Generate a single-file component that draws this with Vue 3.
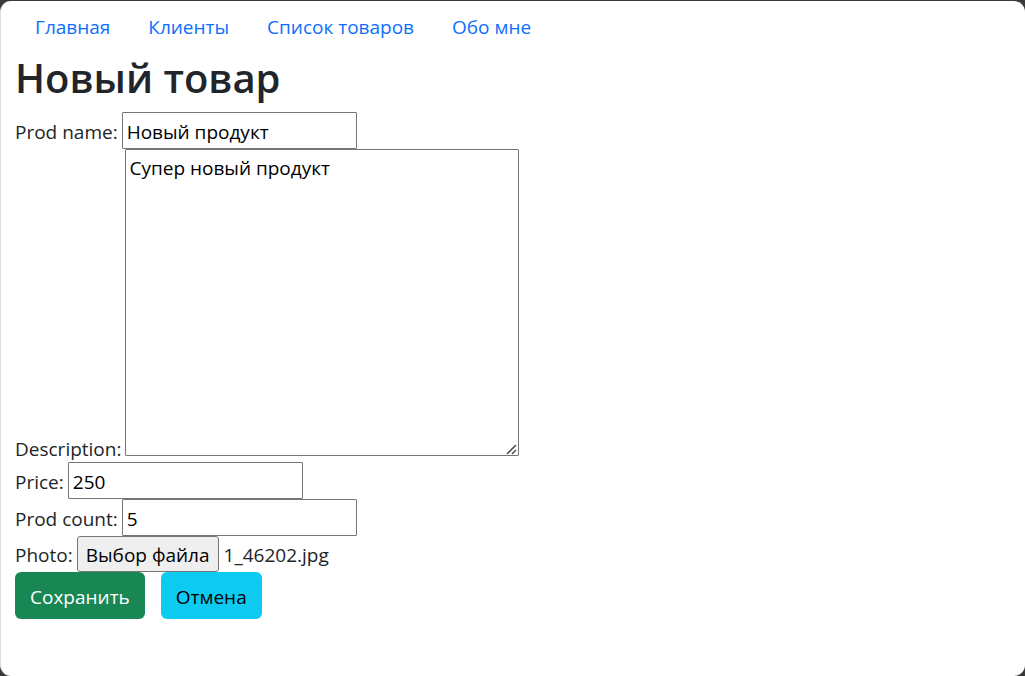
<script setup>
import { ref } from 'vue'

const links = ['Главная', 'Клиенты', 'Список товаров', 'Обо мне']
const name = ref('Новый продукт')
const description = ref('Супер новый продукт')
const price = ref('250')
const count = ref('5')
const fileName = ref('1_46202.jpg')
const picker = ref(null)

function onFile(event) {
  const file = event.target.files[0]
  if (file) fileName.value = file.name
}
</script>

<template>
  <div class="window">
    <nav class="nav">
      <a v-for="link in links" :key="link" href="#">{{ link }}</a>
    </nav>
    <main>
      <h1>Новый товар</h1>
      <form @submit.prevent>
        <div class="row">
          <label for="name">Prod name:</label>
          <input id="name" v-model="name" class="field" type="text" />
        </div>
        <div class="row row-area">
          <label for="description">Description:</label>
          <textarea id="description" v-model="description" spellcheck="false"></textarea>
        </div>
        <div class="row">
          <label for="price">Price:</label>
          <input id="price" v-model="price" class="field" type="text" />
        </div>
        <div class="row">
          <label for="count">Prod count:</label>
          <input id="count" v-model="count" class="field" type="text" />
        </div>
        <div class="row">
          <label for="choose">Photo:</label>
          <button id="choose" class="choose" type="button" @click="picker.click()">Выбор файла</button>
          <span>{{ fileName }}</span>
          <input ref="picker" type="file" hidden @change="onFile" />
        </div>
        <div class="actions">
          <button class="btn save" type="submit">Сохранить</button>
          <button class="btn cancel" type="button">Отмена</button>
        </div>
      </form>
    </main>
  </div>
</template>

<style>
body {
  background: #3a3a3a;
}
</style>

<style scoped>
.window {
  box-sizing: border-box;
  min-height: calc(100vh - 1px);
  margin-top: 1px;
  padding: 0 14px 32px;
  border-left: 1px solid #dedede;
  border-radius: 11px;
  background: #fff;
  color: #212529;
  font: 19px/30px "Segoe UI", "Open Sans", "Noto Sans", sans-serif;
}

.nav {
  display: flex;
  flex-wrap: wrap;
  gap: 38px;
  padding: 11px 20px 10px;
}

.nav a {
  color: #0d6efd;
  text-decoration: none;
}

h1 {
  margin: 0 0 9px;
  font-size: 40px;
  line-height: 51px;
  font-weight: 600;
}

.row {
  display: flex;
  align-items: center;
  gap: 4px;
}

label {
  padding-top: 2px;
}

.row span {
  padding: 2px 0 0 1px;
}

.row-area {
  align-items: flex-end;
  margin-bottom: 6px;
}

.row-area label {
  margin-bottom: -8px;
}

.field,
textarea,
.choose {
  box-sizing: border-box;
  margin: 0;
  border: 1px solid #767676;
  border-radius: 1px;
  background: #fff;
  color: #000;
  font: inherit;
}

.field {
  width: 235px;
  height: 37px;
  padding: 2px 4px 0;
}

textarea {
  width: 394px;
  height: 307px;
  padding: 3px;
  resize: both;
}

textarea::-webkit-resizer {
  background: url("data:image/svg+xml,%3Csvg xmlns='http://www.w3.org/2000/svg' width='15' height='15'%3E%3Cpath d='M4 14l9-9M9 14l4-4' stroke='%23555' stroke-width='1.6'/%3E%3C/svg%3E") no-repeat;
}

.choose {
  height: 36px;
  padding: 2px 8px 0;
  border-radius: 3px;
  background: #efefef;
}

.actions {
  display: flex;
  gap: 16px;
}

.btn {
  height: 47px;
  padding: 3px 15px 0;
  border: 0;
  border-radius: 6px;
  font: inherit;
}

.save {
  background: #198754;
  color: #fff;
}

.cancel {
  background: #0dcaf0;
  color: #000;
}
</style>
